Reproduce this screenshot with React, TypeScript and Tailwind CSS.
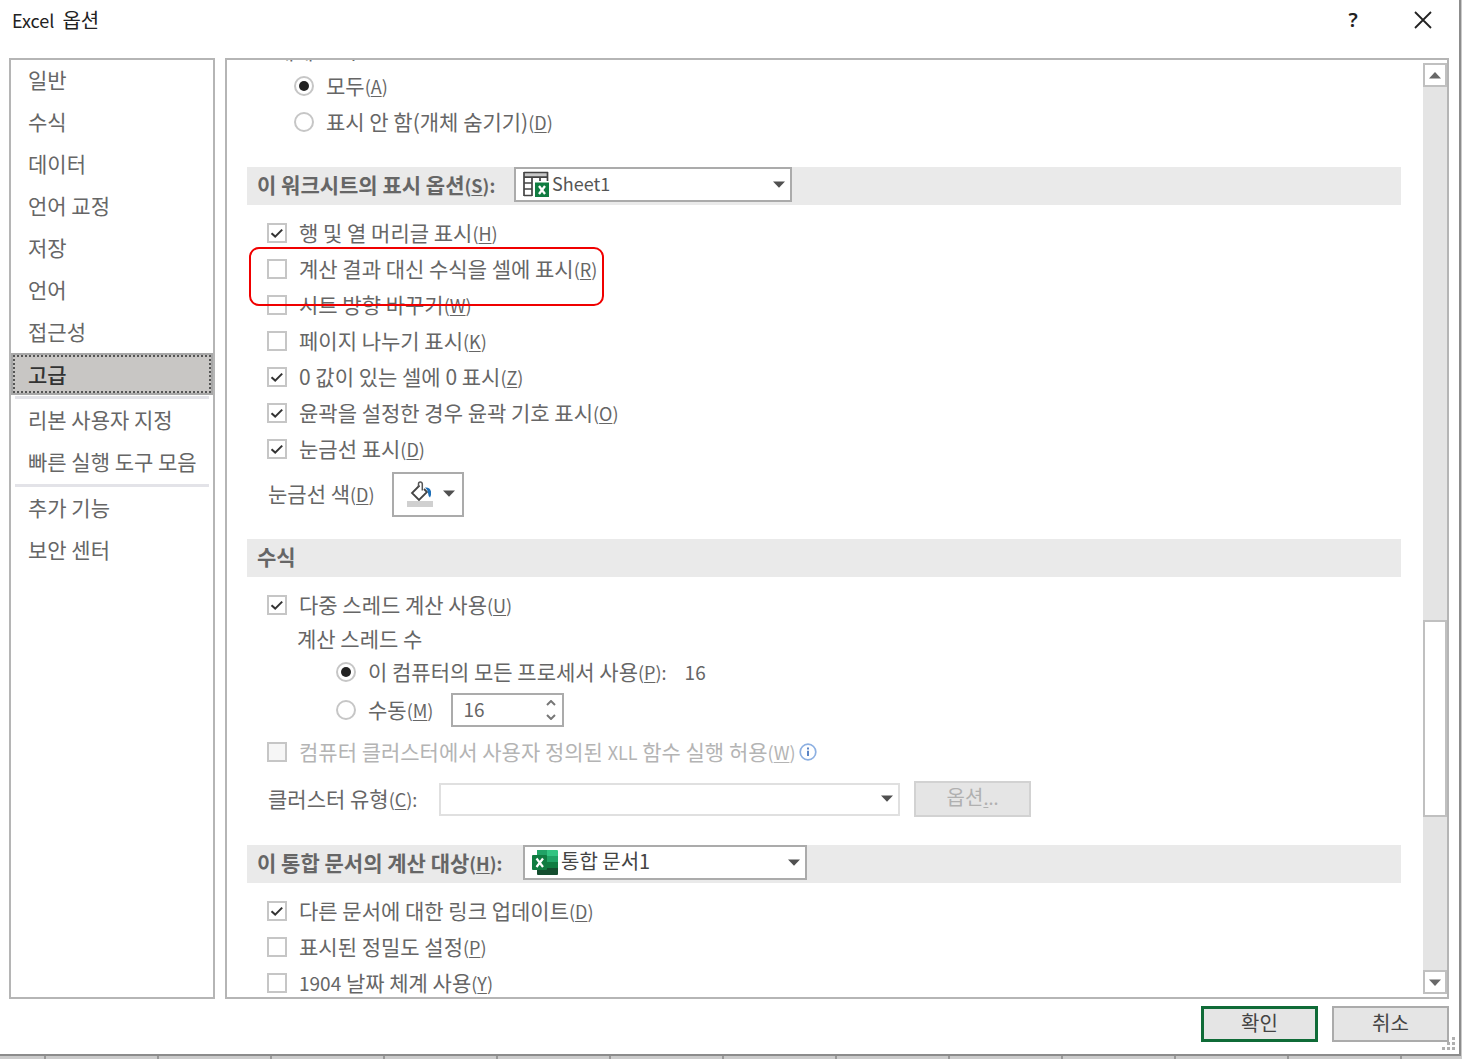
import React, { useState } from "react";

function Key({ k, colon }: { k: string; colon?: boolean }) {
  return (
    <span className="text-lg leading-7">
      (<span className="underline decoration-1 underline-offset-2">{k}</span>){colon ? ":" : ""}
    </span>
  );
}

type CheckProps = {
  text: React.ReactNode;
  k: string;
  on?: boolean;
  disabled?: boolean;
  marked?: boolean;
  after?: React.ReactNode;
};

function Check({ text, k, on = false, disabled = false, marked = false, after }: CheckProps) {
  const [checked, setChecked] = useState(on);
  return (
    <div className="relative flex h-9 items-center pl-5">
      <label className={disabled ? "flex items-center gap-3 text-[#b4b4b4]" : "flex items-center gap-3"}>
        <span className="grid size-5 shrink-0 place-items-center">
          <input
            type="checkbox"
            checked={checked}
            disabled={disabled}
            onChange={(e) => setChecked(e.target.checked)}
            className="col-start-1 row-start-1 size-5 appearance-none border-2 border-[#c6c6c6] bg-white disabled:bg-[#f6f6f6]"
          />
          {checked && (
            <svg viewBox="0 0 20 20" className="pointer-events-none col-start-1 row-start-1 size-5" fill="none" stroke="#333" strokeWidth="2">
              <path d="M4.5 10.2 8.2 13.6 15.2 6.6" />
            </svg>
          )}
        </span>
        <span className="whitespace-nowrap pb-0.5">
          {text}
          <Key k={k} />
        </span>
      </label>
      {after}
      {marked && <span className="pointer-events-none absolute -top-1 left-0.5 z-10 h-[59px] w-[355px] rounded-[10px] border-2 border-[#f00000]" />}
    </div>
  );
}

function Radio({ name, on, children }: { name: string; on?: boolean; children: React.ReactNode }) {
  return (
    <label className="flex items-center gap-3 whitespace-nowrap">
      <span className="grid size-5 shrink-0 place-items-center">
        <input
          type="radio"
          name={name}
          defaultChecked={on}
          className="peer col-start-1 row-start-1 size-5 appearance-none rounded-full border-2 border-[#c6c6c6] bg-white"
        />
        <span className="pointer-events-none col-start-1 row-start-1 hidden size-[10px] rounded-full bg-[#222] peer-checked:block" />
      </span>
      <span className="pb-0.5">{children}</span>
    </label>
  );
}

function Caret({ className }: { className: string }) {
  return (
    <svg viewBox="0 0 12 7" className={className} fill="#505050">
      <path d="M0 0.5h12L6 6.8z" />
    </svg>
  );
}

function SheetIcon() {
  return (
    <svg viewBox="0 0 26 26" className="pointer-events-none absolute left-[9px] top-1 size-[26px]">
      <path d="M1 1h24v23H1z" fill="#fff" />
      <path d="M1 2h24v4H1z" fill="#c8c8c8" />
      <path d="M1 1.5h24M1 6.2h24M1 1v24M9 6v19M24.5 1v9M17 6v4M1 12h8M1 18h8M1 24.5h8" fill="none" stroke="#444" strokeWidth="1.7" />
      <path d="M12 11.5h14V26H12z" fill="#107c41" />
      <path d="m16 15 6 8M22 15l-6 8" stroke="#fff" strokeWidth="2.3" />
    </svg>
  );
}

function ExcelIcon() {
  return (
    <svg viewBox="0 0 26 26" className="pointer-events-none absolute left-[9px] top-1 size-[26px]">
      <path d="M5 1h11v8H5z" fill="#21a366" />
      <path d="M15 1h10q1 0 1 1v6H15z" fill="#33c481" />
      <path d="M5 7h10v6H5z" fill="#107c41" />
      <path d="M15 7h11v6H15z" fill="#21a366" />
      <path d="M5 13h10v6H5z" fill="#185c37" />
      <path d="M15 13h11v6H15z" fill="#107c41" />
      <path d="M5 19h21v6q0 1-1 1H6q-1 0-1-1z" fill="#134d2e" />
      <path d="M1 6h13q1 0 1 1v13q0 1-1 1H1q-1 0-1-1V7q0-1 1-1z" fill="#107c41" />
      <path d="m4.5 9.5 6.5 8.5M11 9.5l-6.5 8.5" stroke="#fff" strokeWidth="2.2" />
    </svg>
  );
}

const before = ["일반", "수식", "데이터", "언어 교정", "저장", "언어", "접근성", "고급"];
const middle = ["리본 사용자 지정", "빠른 실행 도구 모음"];
const last = ["추가 기능", "보안 센터"];

function NavItem({ text }: { text: string }) {
  const active = text === "고급";
  return (
    <button
      type="button"
      className={
        active
          ? "flex h-[42px] w-full items-center border-2 border-[#a8a8a8] bg-[#c8c6c4] text-left font-medium text-[#333]"
          : "flex h-[42px] w-full items-center pb-0.5 pl-[17px] text-left"
      }
    >
      {active ? <span className="flex h-full w-full items-center border-2 border-dotted border-[#555] pl-[13px]">{text}</span> : text}
    </button>
  );
}

function Separator() {
  return <hr className="mx-1 mb-0 mt-px h-[3px] border-0 bg-[#e3e3e8]" />;
}

function Bar({ children }: { children: React.ReactNode }) {
  return <div className="flex h-[38px] items-start bg-[#eaeaea] pl-[10px] font-bold text-[#666]">{children}</div>;
}

export default function App() {
  const [threads, setThreads] = useState(16);
  return (
    <div className="h-screen overflow-hidden bg-[repeating-linear-gradient(90deg,#999_0px,#999_2px,#cbcbcb_2px,#cbcbcb_113px)] bg-[position:44px_0] pb-[3px] pr-px font-['Noto_Sans_CJK_KR',sans-serif] text-[21px] leading-7 text-[#666]">
      <div className="relative flex h-full flex-col border-b-2 border-r-2 border-[#8c8c8c] bg-white">
        <header className="flex h-[58px] shrink-0 items-start pl-3 pr-[22px] pt-1.5 text-[#222]">
          <h1 className="flex items-baseline gap-2 text-[20px] leading-7">
            <span className="text-lg leading-7">Excel</span> <span>옵션</span>
          </h1>
          <button type="button" aria-label="도움말" className="ml-auto mr-[46px] w-5 text-center font-['Noto_Sans',sans-serif] text-xl font-semibold leading-7">
            ?
          </button>
          <button type="button" aria-label="닫기" className="grid size-7 place-items-center">
            <svg viewBox="0 0 18 18" className="size-[18px]" stroke="#222" strokeWidth="1.8">
              <path d="m1 1 16 16M17 1 1 17" />
            </svg>
          </button>
        </header>

        <div className="flex min-h-0 flex-1 gap-2.5 pl-[9px] pr-2.5">
          <nav className="w-[206px] shrink-0 border-2 border-[#b5b5b5]">
            <div className="-mt-px">
              {before.map((t) => <NavItem key={t} text={t} />)}
              <Separator />
              {middle.map((t) => <NavItem key={t} text={t} />)}
              <Separator />
              {last.map((t) => <NavItem key={t} text={t} />)}
            </div>
          </nav>

          <main className="flex min-w-0 flex-1 overflow-hidden border-2 border-[#b5b5b5]">
            <div className="-mt-6 min-w-0 flex-1 pl-5 pr-[22px]">
              <div className="mb-1 flex h-7 items-center pl-7">개체 표시:</div>
              <div className="flex h-9 items-center pl-[47px]">
                <Radio name="objects" on>모두<Key k="A" /></Radio>
              </div>
              <div className="flex h-9 items-center pl-[47px]">
                <Radio name="objects">표시 안 함(개체 숨기기)<Key k="D" /></Radio>
              </div>

              <div className="mb-2.5 mt-[27px]">
                <Bar>
                  <label htmlFor="sheet" className="w-[257px] whitespace-nowrap pt-[3px]">이 워크시트의 표시 옵션<Key k="S" colon /></label>
                  <div className="relative h-[35px] w-[278px]">
                    <select id="sheet" className="h-full w-full appearance-none border-2 border-[#ababab] bg-white pb-1 pl-9 text-lg font-normal leading-7 text-[#555]">
                      <option>Sheet1</option>
                    </select>
                    <SheetIcon />
                    <Caret className="pointer-events-none absolute right-[7px] top-[14px] h-[7px] w-3" />
                  </div>
                </Bar>
              </div>

              <Check text="행 및 열 머리글 표시" k="H" on />
              <Check text="계산 결과 대신 수식을 셀에 표시" k="R" marked />
              <Check text="시트 방향 바꾸기" k="W" />
              <Check text="페이지 나누기 표시" k="K" />
              <Check text="0 값이 있는 셀에 0 표시" k="Z" on />
              <Check text="윤곽을 설정한 경우 윤곽 기호 표시" k="O" on />
              <Check text="눈금선 표시" k="D" on />
              <div className="mb-[22px] mt-[5px] flex items-center pl-[21px]">
                <span className="w-[124px] whitespace-nowrap pb-0.5">눈금선 색<Key k="D" /></span>
                <button type="button" aria-label="눈금선 색" className="flex h-[45px] w-[72px] items-center justify-center gap-2.5 border-2 border-[#ababab] bg-white pb-0.5 pl-1.5">
                  <svg viewBox="0 0 26 26" className="size-[26px]" fill="none">
                    <path d="M12.5 4.5 5 12l7 7 8-8-3-3" stroke="#444" strokeWidth="1.8" />
                    <path d="M11.500 6V3q0-2 1.800-2T15.300 3v6.500" stroke="#555" strokeWidth="1.500" />
                    <path d="M18 6.500q5-.5 6 4 .5 3-1 6-1.800-1.500-2-4.500-.3-3.500-3-5.500z" fill="#1e6fb8" />
                    <path d="M0 20h26v6H0z" fill="#d0d0d0" />
                  </svg>
                  <Caret className="h-[7px] w-3" />
                </button>
              </div>

              <Bar><h2 className="pt-[3px]">수식</h2></Bar>
              <div className="mt-2.5">
                <Check text="다중 스레드 계산 사용" k="U" on />
              </div>
              <div className="flex h-8 items-center pb-0.5 pl-[50px]">계산 스레드 수</div>
              <div className="flex h-[34px] items-center gap-[18px] pl-[89px]">
                <Radio name="threads" on>이 컴퓨터의 모든 프로세서 사용<Key k="P" colon /></Radio>
                <span className="text-[19px] leading-7">16</span>
              </div>
              <div className="mb-[7px] mt-1 flex items-center gap-[18px] pl-[89px]">
                <Radio name="threads">수동<Key k="M" /></Radio>
                <div className="flex h-[34px] w-[113px] items-center border-2 border-[#ababab] bg-white">
                  <input
                    aria-label="스레드 수"
                    value={threads}
                    onChange={(e) => setThreads(Number(e.target.value) || 0)}
                    className="w-20 min-w-0 flex-1 bg-transparent pb-0.5 pl-2.5 text-[19px] leading-7 outline-none"
                  />
                  <div className="mr-[5px] flex flex-col gap-1">
                    <button type="button" aria-label="늘리기" onClick={() => setThreads(threads + 1)} className="grid h-2.5 w-3 place-items-center">
                      <svg viewBox="0 0 10 6" className="h-1.5 w-2.5" fill="none" stroke="#777" strokeWidth="2"><path d="m1 5 4-4 4 4" /></svg>
                    </button>
                    <button type="button" aria-label="줄이기" onClick={() => setThreads(threads - 1)} className="grid h-2.5 w-3 place-items-center">
                      <svg viewBox="0 0 10 6" className="h-1.5 w-2.5" fill="none" stroke="#777" strokeWidth="2"><path d="m1 1 4 4 4-4" /></svg>
                    </button>
                  </div>
                </div>
              </div>
              <Check
                text={<>컴퓨터 클러스터에서 사용자 정의된 <span className="text-lg leading-7">XLL</span> 함수 실행 허용</>}
                k="W"
                disabled
                after={
                  <svg viewBox="0 0 18 18" className="ml-[3px] size-[18px]" fill="none">
                    <circle cx="9" cy="9" r="7.8" stroke="#8db0e2" strokeWidth="1.7" />
                    <path d="M9 7.8V13M9 4.6v2" stroke="#4a78c0" strokeWidth="1.8" />
                  </svg>
                }
              />
              <div className="mb-7 mt-[11px] flex h-9 items-center pl-[21px]">
                <label htmlFor="cluster" className="w-[171px] whitespace-nowrap pb-0.5">클러스터 유형<Key k="C" colon /></label>
                <div className="relative mr-3.5 h-[33px] w-[461px]">
                  <select id="cluster" className="h-full w-full appearance-none border-2 border-[#e0e0e0] bg-white">
                    <option />
                  </select>
                  <Caret className="pointer-events-none absolute right-[7px] top-3 h-[7px] w-3" />
                </div>
                <button type="button" disabled className="h-9 w-[117px] border-2 border-[#d2d2d2] bg-[#e5e5e5] pb-1 text-[20px] leading-7 text-[#b0b0b0]">
                  옵션<span className="text-lg leading-7"><span className="underline decoration-1 underline-offset-2">.</span>..</span>
                </button>
              </div>

              <div className="mb-2.5">
                <Bar>
                  <label htmlFor="book" className="w-[266px] whitespace-nowrap pt-[3px]">이 통합 문서의 계산 대상<Key k="H" colon /></label>
                  <div className="relative h-[35px] w-[284px]">
                    <select id="book" className="h-full w-full appearance-none border-2 border-[#ababab] bg-white pb-1 pl-9 text-[20px] font-normal leading-7 text-[#444]">
                      <option>통합 문서1</option>
                    </select>
                    <ExcelIcon />
                    <Caret className="pointer-events-none absolute right-[7px] top-[14px] h-[7px] w-3" />
                  </div>
                </Bar>
              </div>
              <Check text="다른 문서에 대한 링크 업데이트" k="D" on />
              <Check text="표시된 정밀도 설정" k="P" />
              <Check text={<><span className="text-[19px] leading-7">1904</span> 날짜 체계 사용</>} k="Y" />
            </div>

            <div className="mb-[3px] mt-[3px] flex w-6 shrink-0 flex-col bg-[#e4e4e4]">
              <button type="button" aria-label="위로" className="grid h-6 place-items-center border-2 border-[#c0c0c0] bg-white">
                <svg viewBox="0 0 12 7" className="h-[7px] w-3" fill="#686868"><path d="M0 6.5h12L6 0z" /></svg>
              </button>
              <div className="grow-[535]" />
              <div className="h-[197px] border-2 border-[#c0c0c0] bg-white" />
              <div className="grow-[153]" />
              <button type="button" aria-label="아래로" className="grid h-6 place-items-center border-2 border-[#c0c0c0] bg-white">
                <svg viewBox="0 0 12 7" className="h-[7px] w-3" fill="#686868"><path d="M0 .5h12L6 7z" /></svg>
              </button>
            </div>
          </main>
        </div>

        <footer className="flex h-[55px] shrink-0 items-start justify-end gap-3.5 pr-2.5 pt-[7px] text-[20px] text-[#444]">
          <button type="button" className="h-9 w-[117px] border-[3px] border-[#0f6b37] bg-[#e5e5e5] pb-0.5 leading-7">확인</button>
          <button type="button" className="h-9 w-[117px] border-2 border-[#ababab] bg-[#e5e5e5] pb-0.5 leading-7">취소</button>
        </footer>
        <svg viewBox="0 0 13 13" className="absolute bottom-1 right-1 size-[13px]" fill="#b0b0b0">
          <path d="M10 0h3v3h-3zM5 5h3v3H5zM10 5h3v3h-3zM0 10h3v3H0zM5 10h3v3H5zM10 10h3v3h-3z" />
        </svg>
      </div>
    </div>
  );
}
